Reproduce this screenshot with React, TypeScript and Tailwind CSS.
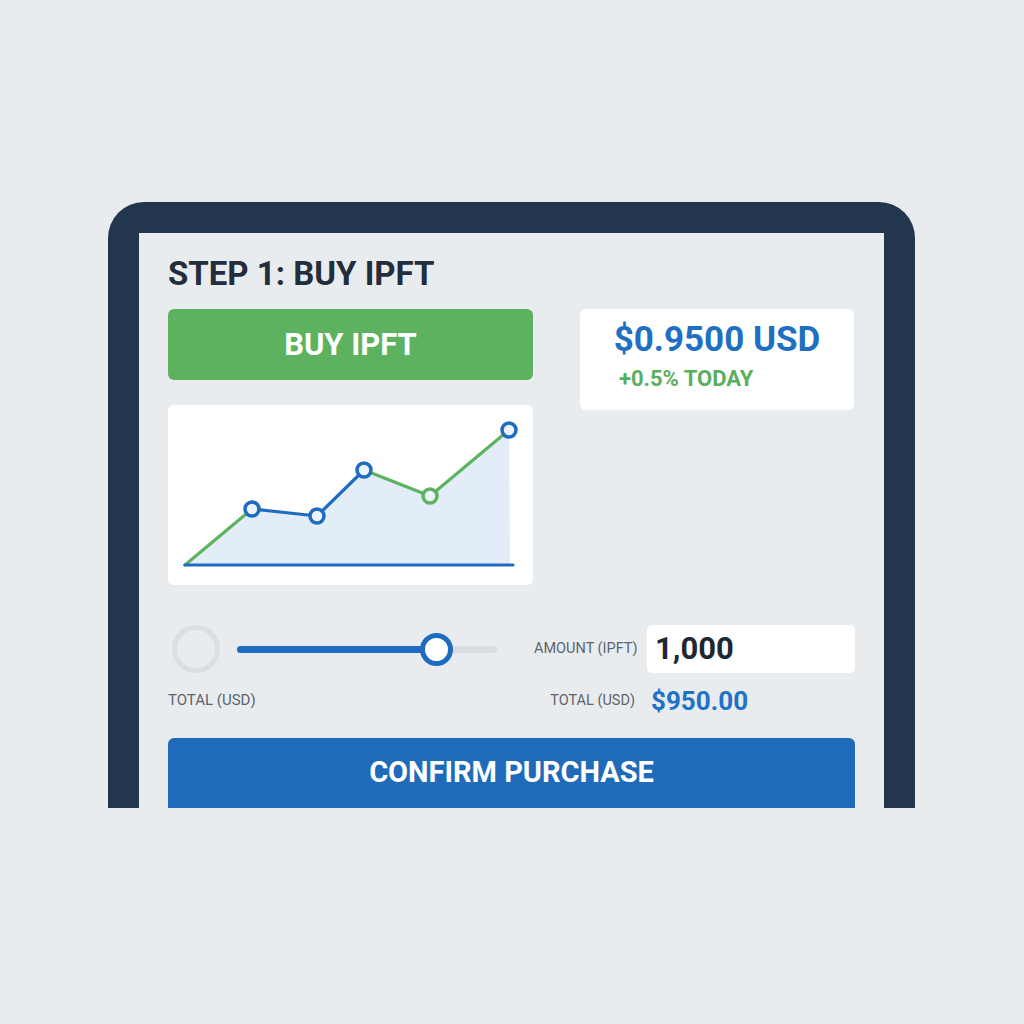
import React from 'react';

const points: [number, number][] = [
  [17, 160],
  [84, 104],
  [149, 111],
  [196, 65],
  [262, 91],
  [341, 25],
];

const segColors = ['#5db35f', '#1f6bc0', '#1f6bc0', '#5db35f', '#5db35f'];
const dotColors = ['#1f6bc0', '#1f6bc0', '#1f6bc0', '#5db35f', '#1f6bc0'];

function PriceChart() {
  const area = points.map((p) => p.join(',')).join(' ') + ' 342,160';
  return (
    <svg width="365" height="180" viewBox="0 0 365 180">
      <polygon points={area} fill="#e2edf8" />
      {points.slice(0, -1).map((p, i) => (
        <line
          key={i}
          x1={p[0]}
          y1={p[1]}
          x2={points[i + 1][0]}
          y2={points[i + 1][1]}
          stroke={segColors[i]}
          strokeWidth={3.2}
          strokeLinecap="round"
        />
      ))}
      <line x1={17} y1={160} x2={345} y2={160} stroke="#1f6bc0" strokeWidth={3.2} strokeLinecap="round" />
      {points.slice(1).map((p, i) => (
        <circle key={i} cx={p[0]} cy={p[1]} r={7} fill="#edf3fa" stroke={dotColors[i]} strokeWidth={3.5} />
      ))}
    </svg>
  );
}

export default function App() {
  return (
    <div className="w-full h-[1024px] bg-[#e9ecef] pt-[202px] pl-[108px] font-[Roboto,sans-serif]">
      {/* Device frame */}
      <div className="w-[807px] h-[606px] bg-[#22364d] rounded-t-[36px] pt-[31px] px-[31px]">
        <div className="h-full bg-[#e9ecef] px-[29px] pt-[22px] flex flex-col overflow-hidden">
          <h1 className="text-[33px] leading-[38px] font-bold text-[#232d3b] mb-[16px]">STEP 1: BUY IPFT</h1>

          <div className="flex gap-[47px]">
            <div className="w-[365px] flex flex-col gap-[25px]">
              <button className="h-[71px] pt-[2px] rounded-[6px] bg-[#5db25f] text-white text-[31px] font-bold">
                BUY IPFT
              </button>
              <div className="h-[180px] bg-white rounded-[6px]">
                <PriceChart />
              </div>
            </div>

            <div className="w-[274px] h-[101px] bg-white rounded-[6px] pt-[11px] flex flex-col">
              <div className="text-center text-[35px] leading-[40px] font-bold text-[#1f6fc3]">$0.9500 USD</div>
              <div className="pl-[39px] mt-[6px] text-[22px] leading-[26px] font-bold text-[#5aaf5c]">+0.5% TODAY</div>
            </div>
          </div>

          {/* Amount controls */}
          <div className="flex mt-[40px] gap-[37px]">
            <div className="w-[329px] flex flex-col">
              <div className="h-[48px] flex items-center">
                <div className="ml-[4px] w-[48px] h-[48px] rounded-full border-[5px] border-[#dcdfe2] shrink-0" />
                <div className="relative ml-[17px] flex-1 h-[7px] rounded-full bg-[#d9dce0]">
                  <div className="h-full w-[200px] rounded-full bg-[#1f6bc0]" />
                  <div className="absolute left-[183px] top-[-13px] w-[33px] h-[33px] rounded-full bg-white border-[5px] border-[#1f6bc0]" />
                </div>
              </div>
              <div className="mt-[17px] text-[15px] leading-[20px] text-[#5b6470]">TOTAL (USD)</div>
            </div>

            <div className="flex-1 grid grid-cols-[101px_1fr] gap-x-[12px] items-center">
              <div className="text-right whitespace-nowrap text-[14.5px] text-[#5b6470]">AMOUNT (IPFT)</div>
              <div className="h-[48px] bg-white rounded-[5px] px-[8px] flex items-center text-[31px] font-bold text-[#1f2733]">
                1,000
              </div>
              <div className="mt-[12px] text-right whitespace-nowrap text-[14.5px] text-[#5b6470]">TOTAL (USD)</div>
              <div className="mt-[12px] pl-[4px] text-[26px] leading-[32px] font-bold text-[#1f72c6]">$950.00</div>
            </div>
          </div>

          <button className="mt-[21px] h-[70px] shrink-0 rounded-t-[6px] bg-[#1f6bb9] text-white text-[29px] font-bold">
            CONFIRM PURCHASE
          </button>
        </div>
      </div>
    </div>
  );
}
